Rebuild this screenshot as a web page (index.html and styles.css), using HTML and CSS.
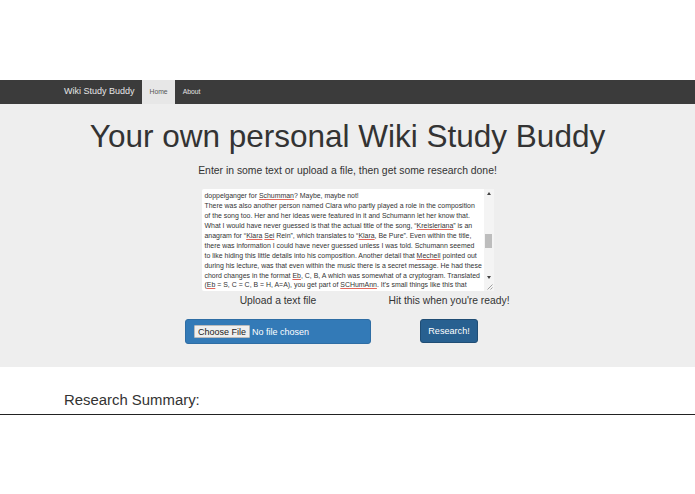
FILE: index.html
```html
<!DOCTYPE html>
<html lang="en">
<head>
<meta charset="utf-8">
<title>Wiki Study Buddy</title>
<link rel="stylesheet" href="styles.css">
</head>
<body>
<nav class="navbar">
  <a class="brand" href="#">Wiki Study Buddy</a>
  <a class="nav-link active" href="#">Home</a>
  <a class="nav-link" href="#">About</a>
</nav>
<section class="jumbotron">
  <h1>Your own personal Wiki Study Buddy</h1>
  <p class="lead">Enter in some text or upload a file, then get some research done!</p>
  <div class="textbox">
    <div class="textbox-text">doppelganger for <u>Schumman</u>? Maybe, maybe not!<br>
There was also another person named Clara who partly played a role in the composition<br>
of the song too. Her and her ideas were featured in it and Schumann let her know that.<br>
What I would have never guessed is that the actual title of the song, “<u>Kreisleriana</u>” is an<br>
anagram for “<u>Klara</u> <u>Sei</u> Rein”, which translates to “<u>Klara</u>, Be Pure”.  Even within the title,<br>
there was information I could have never guessed unless I was told. Schumann seemed<br>
to like hiding this little details into his composition. Another detail that <u>Mechell</u> pointed out<br>
during his lecture, was that even within the music there is a secret message. He had these<br>
chord changes in the format <u>Eb</u>, C, B, A which was somewhat of a cryptogram. Translated<br>
(<u>Eb</u> = S, C = C, B = H, A=A), you get part of <u>SCHumAnn</u>. It’s small things like this that</div>
    <div class="scrollbar">
      <span class="arrow up"></span>
      <span class="thumb"></span>
      <span class="arrow down"></span>
      <svg class="grip" width="6" height="6" viewBox="0 0 6 6"><path d="M0.5 5.5L5.5 0.5M3.5 5.5L5.5 3.5" stroke="#8a8a8a" stroke-width="0.8"/></svg>
    </div>
  </div>
  <div class="actions">
    <div class="upload">
      <label class="action-label" for="file">Upload a text file</label>
      <input class="file-input" id="file" type="file">
    </div>
    <div class="submit">
      <div class="action-label">Hit this when you're ready!</div>
      <button class="research" type="button">Research!</button>
    </div>
  </div>
</section>
<section class="summary">
  <h3>Research Summary:</h3>
</section>
</body>
</html>
```
FILE: styles.css
```css
* { box-sizing: border-box; }
html, body { margin: 0; padding: 0; }
body {
  background: #fff;
  color: #333;
  font-family: "Liberation Sans", Arial, sans-serif;
  padding-top: 80px;
  height: 494px;
  overflow: hidden;
}
.navbar {
  display: flex;
  align-items: stretch;
  height: 24px;
  background: #3b3b3b;
  padding-left: 64px;
}
.brand {
  color: #e6e6e6;
  font-size: 9px;
  line-height: 23px;
  text-decoration: none;
  width: 78px;
  white-space: nowrap;
}
.nav-link {
  color: #e4e4e4;
  font-size: 6.8px;
  line-height: 23px;
  padding: 0 7.5px;
  text-decoration: none;
}
.nav-link.active {
  background: #e7e7e7;
  color: #555;
}
.jumbotron {
  height: 263px;
  background: #eee;
  padding-top: 13px;
  display: flex;
  flex-direction: column;
  align-items: center;
}
h1 {
  margin: 0;
  font-size: 31.5px;
  font-weight: 400;
  line-height: 39px;
  color: #333;
}
.lead {
  margin: 5px 0 0;
  font-size: 10.4px;
  line-height: 20px;
  color: #333;
}
.textbox {
  display: flex;
  width: 292px;
  height: 102px;
  margin-top: 8px;
  background: #fff;
  border-radius: 2px;
}
.textbox-text {
  flex: 1;
  height: 102px;
  padding: 2px 0 0 3px;
  overflow: hidden;
  font-size: 6.95px;
  line-height: 9.93px;
  white-space: nowrap;
  color: #333;
}
.textbox-text u {
  text-decoration: underline solid #e2685c 1px;
  text-underline-offset: 1px;
}
.scrollbar {
  position: relative;
  width: 10px;
  flex: none;
  background: #f4f4f4;
}
.arrow {
  position: absolute;
  left: 3px;
  width: 0;
  height: 0;
  border-left: 2px solid transparent;
  border-right: 2px solid transparent;
}
.arrow.up { top: 3px; border-bottom: 3px solid #444; }
.arrow.down { bottom: 12px; border-top: 3px solid #444; }
.thumb {
  position: absolute;
  left: 1px;
  top: 45px;
  width: 7px;
  height: 14px;
  background: #bdbdbd;
}
.grip {
  position: absolute;
  right: 1px;
  bottom: 1px;
}
.actions {
  display: flex;
  gap: 17px;
  margin-top: 1px;
}
.upload { width: 186px; display: flex; flex-direction: column; align-items: center; }
.submit { width: 122px; display: flex; flex-direction: column; align-items: center; }
.action-label {
  display: block;
  font-size: 10.3px;
  line-height: 18px;
  white-space: nowrap;
  color: #333;
}
.file-input {
  display: block;
  width: 186px;
  height: 25px;
  margin-top: 9px;
  padding: 5px 8px;
  background: #337ab7;
  border: 1px solid #2e6da4;
  border-radius: 3px;
  color: #fff;
  font-family: "Liberation Sans", Arial, sans-serif;
  font-size: 9px;
}
.file-input::file-selector-button {
  font: inherit;
  height: 13px;
  padding: 0 3px;
  margin-right: 2px;
  background: #efefef;
  color: #222;
  border: 1px solid #bbb;
  border-radius: 1px;
}
.research {
  display: block;
  width: 58px;
  height: 24px;
  margin-top: 9px;
  padding: 0;
  background: #286090;
  border: 1px solid #204d74;
  border-radius: 3px;
  color: #fff;
  font-family: "Liberation Sans", Arial, sans-serif;
  font-size: 9.1px;
}
.summary {
  padding-left: 64px;
  height: 48px;
  border-bottom: 1px solid #222;
  padding-top: 23px;
}
h3 {
  margin: 0;
  font-size: 14.9px;
  font-weight: 400;
  line-height: 20px;
  color: #333;
}
```
